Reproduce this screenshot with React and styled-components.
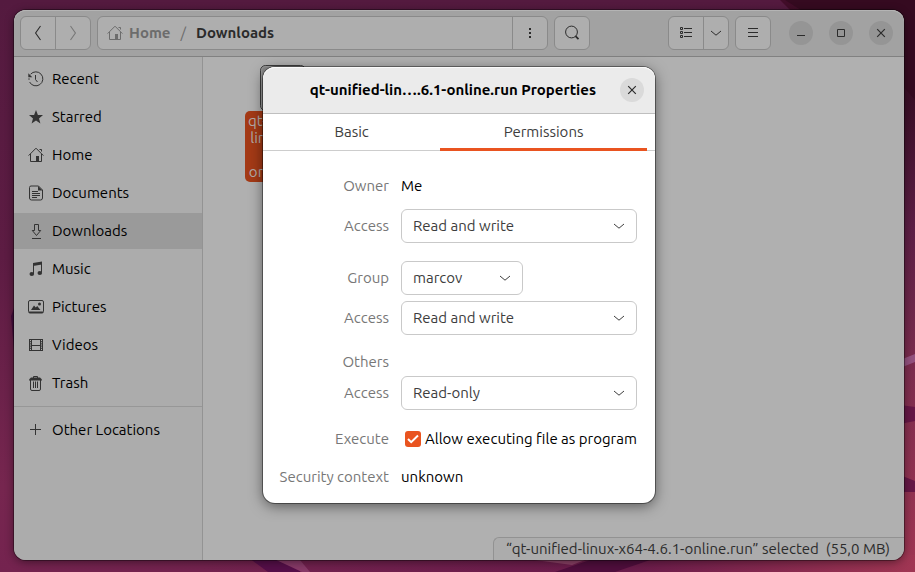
import React from "react";
import styled, { createGlobalStyle, css } from "styled-components";

const Global = createGlobalStyle`
  *, *::before, *::after { box-sizing: border-box; }
  body { margin: 0; }
  body, button, select, input {
    font-family: Ubuntu, "Noto Sans", "Open Sans", sans-serif;
    font-size: 15px;
    line-height: 16px;
  }
  button { padding: 0; border: 0; background: none; color: inherit; }
  a { color: inherit; text-decoration: none; }
`;

/* ---------- desktop ---------- */

const Desktop = styled.div`
  position: relative;
  display: flex;
  min-height: 100vh;
  padding: 10px 11px 12px 14px;
  overflow: hidden;
  background: linear-gradient(180deg, #541a3f 0%, #5d1c43 45%, #76264f 85%, #74234f 100%);
`;

const Wallpaper = styled.svg`
  position: absolute;
  inset: 0;
  width: 100%;
  height: 100%;
`;

const Window = styled.main`
  position: relative;
  display: flex;
  flex: 1;
  flex-direction: column;
  min-width: 0;
  border-radius: 12px;
  background: #b0b0b0;
  box-shadow: 0 0 0 1px rgba(0, 0, 0, 0.35), 0 2px 10px rgba(0, 0, 0, 0.45);
`;

/* ---------- header bar ---------- */

const HeaderBar = styled.header`
  display: flex;
  align-items: center;
  gap: 6px;
  height: 47px;
  padding: 0 11px 0 6px;
  border-bottom: 1px solid #818181;
  border-radius: 12px 12px 0 0;
  background: #a2a2a2;
  box-shadow: inset 0 1px #b4b4b4;
  color: #2b2b2b;
`;

const ButtonGroup = styled.div`
  display: flex;
  flex: ${(p) => (p.$grow ? "1" : "none")};
  min-width: 0;
  height: 34px;
  border: 1px solid #8a8a8a;
  border-radius: 6px;
  background: #aeaeae;
`;

const ToolButton = styled.button`
  display: flex;
  align-items: center;
  justify-content: center;
  width: ${(p) => (p.$narrow ? 25 : p.$split ? 35 : 34)}px;
  border-left: ${(p) => (p.$split ? "1px solid #8a8a8a" : "0")};
  color: ${(p) => (p.$dim ? "#777" : "#2b2b2b")};
`;

const Breadcrumbs = styled.nav`
  display: flex;
  flex: 1;
  align-items: center;
  min-width: 0;
  padding-left: 9px;
  font-weight: 700;
`;

const Crumb = styled.a`
  display: flex;
  align-items: center;
  gap: 6px;
  color: ${(p) => (p.$current ? "#2b2b2b" : "#6c6c6c")};
`;

const Slash = styled.span`
  padding: 0 10px;
  color: #6c6c6c;
  font-weight: 400;
`;

const Spacer = styled.div`
  flex: 0 1 66px;
`;

const WindowControls = styled.div`
  display: flex;
  gap: 16px;
  margin-left: 12px;
`;

const RoundButton = styled.button`
  display: flex;
  align-items: center;
  justify-content: center;
  width: 24px;
  height: 24px;
  border-radius: 50%;
  background: ${(p) => (p.$light ? "#dadada" : "#959595")};
  color: #2b2b2b;
`;

/* ---------- body ---------- */

const Body = styled.div`
  display: flex;
  flex: 1;
`;

const Sidebar = styled.nav`
  display: flex;
  flex: none;
  flex-direction: column;
  gap: 2px;
  width: 189px;
  padding: 4px 0;
  border-right: 1px solid #939393;
  border-radius: 0 0 0 12px;
  background: #acacac;
`;

const Place = styled.a`
  display: flex;
  align-items: center;
  gap: 8px;
  height: 36px;
  padding: 0 14px;
  background: ${(p) => (p.$selected ? "#9a9a9a" : "transparent")};
  color: #000;
  svg { color: #333; }
`;

const Divider = styled.hr`
  width: 100%;
  height: 1px;
  margin: 3px 0;
  border: 0;
  background: #979797;
`;

const Files = styled.section`
  display: flex;
  flex: 1;
  flex-direction: column;
  justify-content: space-between;
  min-width: 0;
  padding-top: 8px;
`;

const FileItem = styled.figure`
  display: flex;
  flex-direction: column;
  align-items: center;
  width: 76px;
  margin: 0 0 0 42px;
`;

const FileLabel = styled.figcaption`
  width: 100%;
  padding: 1px 0 2px;
  border-radius: 5px;
  background: #a43a16;
  color: #b3aca9;
  line-height: 17px;
  text-align: center;
`;

const StatusBar = styled.p`
  align-self: flex-end;
  height: 23px;
  margin: 0;
  padding: 3px 14px 0 12px;
  border: solid #929292;
  border-width: 1px 0 0 1px;
  border-radius: 6px 0 12px 0;
  background: #acacac;
  color: #2b2b2b;
  white-space: pre;
`;

/* ---------- dialog ---------- */

const Overlay = styled.div`
  position: absolute;
  inset: 0;
  display: flex;
  align-items: center;
  justify-content: center;
`;

const Dialog = styled.section`
  width: 392px;
  border-radius: 12px;
  background: #fff;
  box-shadow: 0 0 0 1px rgba(0, 0, 0, 0.4), 0 3px 14px rgba(0, 0, 0, 0.5);
`;

const DialogHeader = styled.header`
  display: grid;
  grid-template-columns: 34px 1fr 24px;
  align-items: center;
  height: 47px;
  padding: 0 11px;
  border-bottom: 1px solid #bfbfbf;
  border-radius: 12px 12px 0 0;
  background: #ebebeb;
  box-shadow: inset 0 1px #fafafa;
`;

const DialogTitle = styled.h1`
  grid-column: 2;
  margin: 0;
  padding-right: 24px;
  font-size: 15px;
  font-weight: 700;
  text-align: right;
  white-space: nowrap;
`;

const Tabs = styled.div`
  display: flex;
  height: 37px;
  padding-right: 8px;
  box-shadow: inset 0 -1px #cdcdcd;
`;

const Tab = styled.button`
  flex: ${(p) => p.$share};
  padding-top: 2px;
  border-bottom: 3px solid transparent;
  color: #3d3d3d;
  ${(p) => p.$active && css`border-color: #e95420;`}
`;

const Form = styled.form`
  display: flex;
  flex-direction: column;
  gap: 18px;
  padding: 18px 18px 18px 16px;
`;

const FieldGroup = styled.div`
  display: flex;
  flex-direction: column;
  gap: 6px;
`;

const Row = styled.div`
  display: grid;
  grid-template-columns: 110px 1fr;
  column-gap: 12px;
  align-items: center;
  min-height: ${(p) => (p.$tall ? 34 : 17)}px;
`;

const FieldName = styled.label`
  color: #777;
  text-align: right;
  white-space: nowrap;
`;

const SelectBox = styled.div`
  position: relative;
  width: ${(p) => (p.$compact ? "122px" : "100%")};
  svg {
    position: absolute;
    top: 9px;
    right: 10px;
    color: #3d3d3d;
    pointer-events: none;
  }
`;

const Select = styled.select`
  display: block;
  width: 100%;
  height: 34px;
  padding: 0 30px 0 11px;
  border: 1px solid #c9c9c9;
  border-radius: 6px;
  appearance: none;
  background: #fff;
  color: #3d3d3d;
`;

const CheckLabel = styled.label`
  display: flex;
  align-items: center;
  gap: 4px;
  height: 22px;
  padding-left: 4px;
  white-space: nowrap;
`;

const CheckBox = styled.span`
  position: relative;
  width: 16px;
  height: 16px;
  svg { position: absolute; inset: 0; color: #fff; pointer-events: none; }
`;

const CheckInput = styled.input`
  display: block;
  width: 16px;
  height: 16px;
  margin: 0;
  border-radius: 3px;
  appearance: none;
  background: #c4c4c4;
  &:checked { background: #e95420; }
`;

/* ---------- icons ---------- */

const Glyph = styled.svg.attrs({ viewBox: "0 0 16 16", width: 16, height: 16, "aria-hidden": true })`
  display: block;
  flex: none;
  fill: none;
  stroke: currentColor;
  stroke-width: ${(p) => p.$w || 1};
`;

const solid = { fill: "currentColor", stroke: "none" };

const Back = () => <Glyph $w={1.1}><path d="M10.5 1 5.6 8l4.9 7" /></Glyph>;
const Forward = () => <Glyph $w={1.1}><path d="M5.5 1l4.9 7-4.9 7" /></Glyph>;
const HomeIcon = () => (
  <Glyph>
    <path d="M.6 8.6 8 1.2l7.4 7.4M2.5 7v7.5h11V7M11.5 2.5h2v2" />
    <path d="M8 9h3v5.5H8z" {...solid} />
  </Glyph>
);
const Dots = () => <Glyph><path d="M7 3h2v2H7zM7 7h2v2H7zM7 11h2v2H7z" {...solid} /></Glyph>;
const Search = () => <Glyph><circle cx="7.5" cy="7" r="5.9" /><path d="m11.5 11.2 3 3" strokeWidth="1.8" /></Glyph>;
const ListIcon = () => (
  <Glyph>
    <path d="M2.5 2.5h2v2h-2zM2.5 6.5h2v2h-2zM2.5 10.5h2v2h-2zM6 3.5h8M6 7.5h8M6 11.5h8" />
  </Glyph>
);
const Chevron = () => <Glyph><path d="m3 6 5 4.2L13 6" /></Glyph>;
const Menu = () => <Glyph><path d="M3 3.5h10M3 7.5h10M3 11.5h10" /></Glyph>;
const Minimize = () => <Glyph><path d="M4 10.5h8" /></Glyph>;
const Maximize = () => <Glyph><path d="M4.5 4.5h7v7h-7z" /></Glyph>;
const Close = () => <Glyph $w={1.2}><path d="m4.2 4.2 7.6 7.6M11.8 4.2l-7.6 7.6" /></Glyph>;
const Recent = () => (
  <Glyph>
    <path d="M2.6 3.2A7 7 0 1 1 1.6 11M1 8.8V7.3M7.5 4v4.5L9.5 11" />
    <path d="M.3 2.2v4h4z" {...solid} />
  </Glyph>
);
const Star = () => <Glyph><path d="m8 1 1.9 4.9 5.1.2-4 3.3 1.4 5.1L8 11.6l-4.4 2.9L5 9.4 1 6.1l5.1-.2z" {...solid} /></Glyph>;
const Documents = () => (
  <Glyph>
    <path d="M3 1h7.5l4 4v8a2 2 0 0 1-2 2h-9a2 2 0 0 1-2-2V2.500A1.500 1.500 0 0 1 3 1zM4 6.500h6M4 8.500h8M4 10.500h8M4 12.500h5" />
    <path d="M10 1v4.5h4.5z" {...solid} />
  </Glyph>
);
const Downloads = () => <Glyph><path d="M6.5 1.5h4v6h2.2l-4.200 5-4.200-5h2.200zM4 15.500h9" /></Glyph>;
const Music = () => (
  <Glyph>
    <path d="M5.5 13V2.5M13.5 11.5v-10" />
    <path d="M5 2l9-1.5v3L5 5z" {...solid} />
    <ellipse cx="3.8" cy="13" rx="2.3" ry="2" {...solid} />
    <ellipse cx="11.8" cy="12" rx="2.3" ry="2" {...solid} />
  </Glyph>
);
const Pictures = () => (
  <Glyph>
    <rect x=".5" y="1.5" width="15" height="12.5" rx="1.5" />
    <path d="M1 12.5h14V14H1zM3 11l3-4.500 1.800 2 1.400-1.500L12.500 11z" {...solid} />
    <circle cx="11.5" cy="5" r="1.5" {...solid} />
  </Glyph>
);
const Videos = () => (
  <Glyph>
    <path d="M3.5 2v12M12.5 2v12M3 2.5h10M3 8.5h10M3 13.5h10M1.5 2v12M14.5 2v12" />
    <path d="M2.5 2v12M13.5 2v12" strokeDasharray="1 1.2" />
  </Glyph>
);
const Trash = () => (
  <Glyph>
    <path d="M2.5 5v9A1.5 1.5 0 0 0 4 15.500h7a1.500 1.500 0 0 0 1.500-1.500V5M5.500 6.500V13M7.500 6.500V13M9.500 6.500V13M5.500 3V1.500h4V3" />
    <path d="M3 2.5h9l2 2v1H1v-1z" {...solid} />
  </Glyph>
);
const Plus = () => <Glyph><path d="M7.5 2v11M2 7.5h11" /></Glyph>;
const Tick = () => <Glyph $w={2}><path d="m3 8 3.2 3.2L13 4.5" /></Glyph>;

const FileIcon = () => (
  <svg width="46" height="46" viewBox="0 0 46 46" aria-hidden="true">
    <rect x=".5" y=".5" width="45" height="45" rx="5" fill="#8a8a8a" stroke="#3c3c3c" />
    <rect x="1.5" y="1.5" width="43" height="43" rx="4" fill="none" stroke="#9a9a9a" />
  </svg>
);

const Background = () => (
  <Wallpaper viewBox="0 0 915 572" preserveAspectRatio="none" aria-hidden="true">
    <defs>
      <linearGradient id="edge" x1="0" y1="0" x2="0" y2="1">
        <stop offset="0" stopColor="#420d29" />
        <stop offset=".17" stopColor="#3a0e26" />
        <stop offset=".4" stopColor="#5d1e45" />
        <stop offset=".65" stopColor="#7d2d4e" />
        <stop offset="1" stopColor="#a03653" />
      </linearGradient>
      <linearGradient id="base" x1="0" y1="0" x2="1" y2="0">
        <stop offset="0" stopColor="#74234f" />
        <stop offset=".6" stopColor="#6b1c4b" />
        <stop offset="1" stopColor="#a03653" />
      </linearGradient>
    </defs>
    <path d="M780 0h135v572H880V100z" fill="url(#edge)" />
    <path d="M785 0h130v100L880 60z" fill="#350a20" />
    <path d="M200 555h715v17H200z" fill="url(#base)" />
    <path d="M245 555h55v17h-32z" fill="#560f49" />
    <path d="M272 558l28 2 10 12h-8z" fill="#883a68" />
    <path d="M535 560h50l-13 5z" fill="#8c4267" />
    <path d="M590 560h60l-35 12h-60z" fill="#500e3d" />
    <path d="M900 360l15-6v8l-15 6z" fill="#94527f" />
    <path d="M900 405l15 2v14l-15 3zM900 475l15 6v11h-15z" fill="#661746" />
    <path d="M14 308l-3 8 3 35z" fill="#430c3c" />
  </Wallpaper>
);

/* ---------- data ---------- */

const places = [
  ["Recent", Recent],
  ["Starred", Star],
  ["Home", HomeIcon],
  ["Documents", Documents],
  ["Downloads", Downloads],
  ["Music", Music],
  ["Pictures", Pictures],
  ["Videos", Videos],
  ["Trash", Trash],
];

const accessOptions = ["Read and write", "Read-only", "None"];

function AccessRow({ id, value }) {
  return (
    <Row $tall>
      <FieldName htmlFor={id}>Access</FieldName>
      <Dropdown id={id} value={value} options={accessOptions} />
    </Row>
  );
}

function Dropdown({ id, value, options, compact }) {
  return (
    <SelectBox $compact={compact}>
      <Select id={id} defaultValue={value}>
        {options.map((o) => <option key={o}>{o}</option>)}
      </Select>
      <Chevron />
    </SelectBox>
  );
}

function PropertiesDialog() {
  return (
    <Dialog role="dialog" aria-labelledby="dialog-title">
      <DialogHeader>
        <DialogTitle id="dialog-title">qt-unified-lin….6.1-online.run Properties</DialogTitle>
        <RoundButton $light aria-label="Close dialog"><Close /></RoundButton>
      </DialogHeader>
      <Tabs role="tablist">
        <Tab role="tab" $share={6} aria-selected="false">Basic</Tab>
        <Tab role="tab" $share={7} $active aria-selected="true">Permissions</Tab>
      </Tabs>
      <Form>
        <FieldGroup>
          <Row $tall><FieldName as="span">Owner</FieldName><span>Me</span></Row>
          <AccessRow id="owner-access" value="Read and write" />
        </FieldGroup>
        <FieldGroup>
          <Row $tall>
            <FieldName htmlFor="group">Group</FieldName>
            <Dropdown id="group" value="marcov" options={["marcov"]} compact />
          </Row>
          <AccessRow id="group-access" value="Read and write" />
        </FieldGroup>
        <FieldGroup>
          <Row><FieldName as="span">Others</FieldName></Row>
          <AccessRow id="others-access" value="Read-only" />
        </FieldGroup>
        <Row>
          <FieldName htmlFor="execute">Execute</FieldName>
          <CheckLabel>
            <CheckBox><CheckInput id="execute" type="checkbox" defaultChecked /><Tick /></CheckBox>
            Allow executing file as program
          </CheckLabel>
        </Row>
        <Row><FieldName as="span">Security context</FieldName><span>unknown</span></Row>
      </Form>
    </Dialog>
  );
}

export default function App() {
  return (
    <Desktop>
      <Global />
      <Background />
      <Window>
        <HeaderBar>
          <ButtonGroup>
            <ToolButton aria-label="Back"><Back /></ToolButton>
            <ToolButton $dim $split aria-label="Forward"><Forward /></ToolButton>
          </ButtonGroup>
          <ButtonGroup $grow>
            <Breadcrumbs aria-label="Path">
              <Crumb href="#home"><HomeIcon />Home</Crumb>
              <Slash>/</Slash>
              <Crumb href="#downloads" $current>Downloads</Crumb>
            </Breadcrumbs>
            <ToolButton $split aria-label="Folder menu"><Dots /></ToolButton>
          </ButtonGroup>
          <ButtonGroup>
            <ToolButton aria-label="Search"><Search /></ToolButton>
          </ButtonGroup>
          <Spacer />
          <ButtonGroup>
            <ToolButton aria-label="List view"><ListIcon /></ToolButton>
            <ToolButton $narrow $split aria-label="View options"><Chevron /></ToolButton>
          </ButtonGroup>
          <ButtonGroup>
            <ToolButton aria-label="Main menu"><Menu /></ToolButton>
          </ButtonGroup>
          <WindowControls>
            <RoundButton aria-label="Minimize"><Minimize /></RoundButton>
            <RoundButton aria-label="Maximize"><Maximize /></RoundButton>
            <RoundButton aria-label="Close"><Close /></RoundButton>
          </WindowControls>
        </HeaderBar>
        <Body>
          <Sidebar aria-label="Places">
            {places.map(([name, Icon]) => (
              <Place key={name} href={`#${name.toLowerCase()}`} $selected={name === "Downloads"}>
                <Icon />{name}
              </Place>
            ))}
            <Divider />
            <Place href="#other"><Plus />Other Locations</Place>
          </Sidebar>
          <Files>
            <FileItem>
              <FileIcon />
              <FileLabel>qt-unified-<br />linux-x64-<br />4.6.1-<br />online.run</FileLabel>
            </FileItem>
            <StatusBar>“qt-unified-linux-x64-4.6.1-online.run” selected  (55,0 MB)</StatusBar>
          </Files>
        </Body>
        <Overlay><PropertiesDialog /></Overlay>
      </Window>
    </Desktop>
  );
}
